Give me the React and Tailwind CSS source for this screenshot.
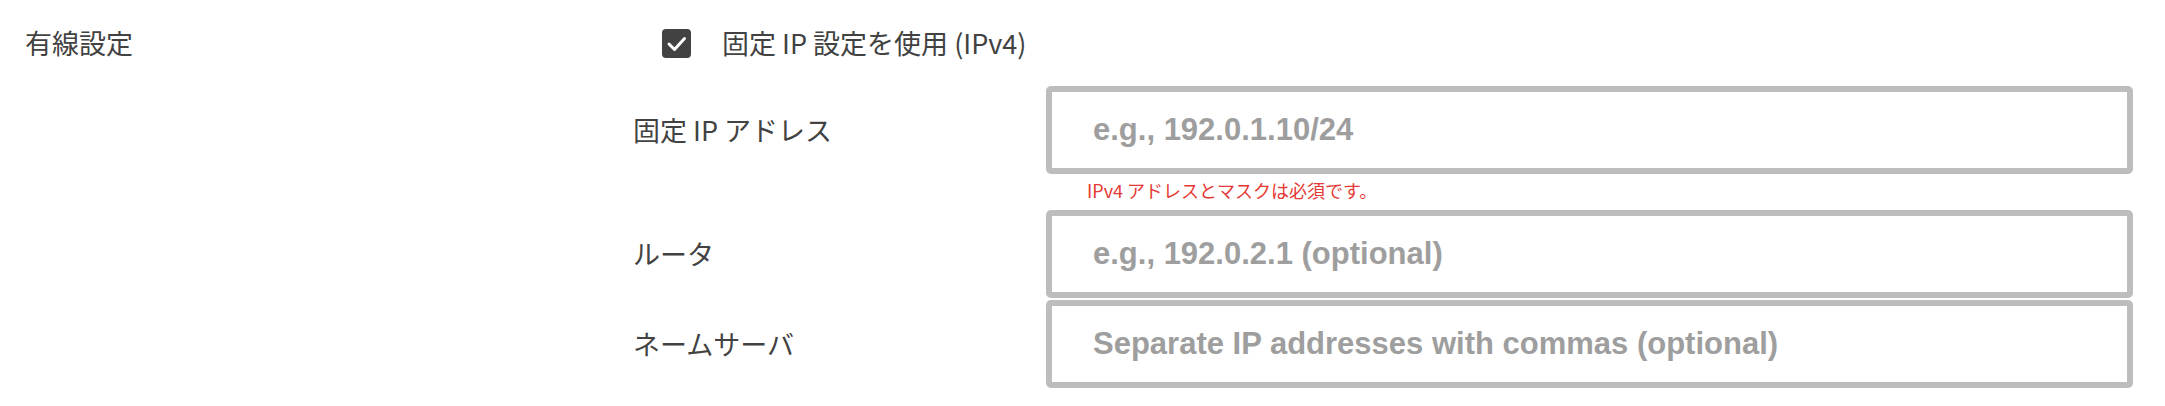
import React from "react";

const fields = [
  {
    label: "固定 IP アドレス",
    placeholder: "e.g., 192.0.1.10/24",
    error: "IPv4 アドレスとマスクは必須です。",
  },
  {
    label: "ルータ",
    placeholder: "e.g., 192.0.2.1 (optional)",
  },
  {
    label: "ネームサーバ",
    placeholder: "Separate IP addresses with commas (optional)",
  },
];

const App = () => {
  return (
    <div className="flex w-[2165px] h-[406px] bg-white text-[#424242] font-['Noto_Sans_CJK_JP','Noto_Sans',sans-serif]">
      <div className="w-[633px] shrink-0 h-[86px] flex items-center pl-[25px] text-[27px]">
        有線設定
      </div>

      <div className="flex-1 pr-[32px]">
        {/* Static IP toggle */}
        <div className="h-[86px] flex items-center pl-[29px] gap-[31px]">
          <div className="w-[29px] h-[29px] rounded-[4px] bg-[#424242] flex items-center justify-center">
            <svg width="29" height="29" viewBox="0 0 29 29" fill="none">
              <path
                d="M7 15 L12.5 20.5 L22.5 9.5"
                stroke="white"
                strokeWidth="3"
                strokeLinecap="round"
                strokeLinejoin="round"
              />
            </svg>
          </div>
          <span className="text-[27px]">固定 IP 設定を使用 (IPv4)</span>
        </div>

        {/* Fields */}
        {fields.map((f, idx) => (
          <div key={idx} className={idx === 2 ? "mt-[2px]" : ""}>
            <div className="flex items-center h-[88px]">
              <div className="w-[413px] shrink-0 text-[27px]">{f.label}</div>
              <input
                type="text"
                placeholder={f.placeholder}
                className="w-[1087px] h-[88px] border-[6px] border-[#bdbdbd] rounded-[5px] bg-white pl-[41px] outline-none font-['Liberation_Sans',Arial,sans-serif] font-bold text-[31px] placeholder:text-[#9e9e9e]"
              />
            </div>
            {f.error && (
              <div className="h-[36px] pl-[454px] pt-[4px] leading-[24px] text-[18px] text-[#e53935]">
                {f.error}
              </div>
            )}
          </div>
        ))}
      </div>
    </div>
  );
};

export default App;
